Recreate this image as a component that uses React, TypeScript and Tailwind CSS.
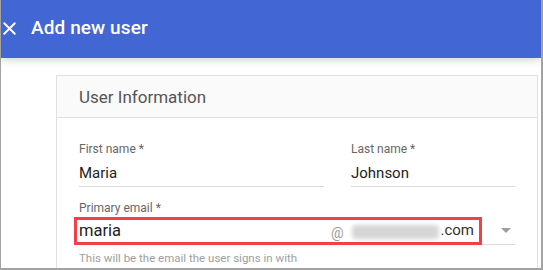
import { X } from 'lucide-react'

export default function App() {
  return (
    <div
      className="w-[543px] h-[270px] overflow-hidden bg-white border-l border-r-2 border-b-2 border-[#a3a3a3] flex flex-col"
      style={{ fontFamily: 'Roboto, "Liberation Sans", sans-serif' }}
    >
      {/* Barra superior */}
      <div className="relative z-10 h-[58px] shrink-0 bg-[#4266d4] flex items-center shadow-[0_2px_8px_rgba(0,0,0,0.18)]">
        <X size={21} strokeWidth={2.2} className="text-white -ml-[2px] -mt-[1px]" />
        <span className="ml-[11px] text-white text-[19px] font-medium tracking-[0.1px] -mt-[2px]">
          Add new user
        </span>
      </div>

      {/* Conteúdo */}
      <div className="flex-1 pl-[55px] pr-[3px] pt-[17px]">
        <div className="border border-[#e0e0e0] h-[220px]">
          <div className="h-[42px] bg-[#fafafa] border-b border-[#e0e0e0] flex items-center px-[22px]">
            <span className="text-[17px] text-[#555] pt-[2px]">User Information</span>
          </div>

          <div className="px-[22px] pt-[23px]">
            <div className="grid grid-cols-[245px_1fr] gap-x-[27px]">
              <div>
                <p className="text-[12px] leading-[16px] text-[#666]">First name *</p>
                <p className="mt-[6px] text-[15px] leading-[20px] text-[#222] border-b border-[#dcdcdc] pb-[3px]">
                  Maria
                </p>
              </div>
              <div>
                <p className="text-[12px] leading-[16px] text-[#666]">Last name *</p>
                <p className="mt-[6px] text-[15px] leading-[20px] text-[#222] border-b border-[#dcdcdc] pb-[3px]">
                  Johnson
                </p>
              </div>
            </div>

            <div className="mt-[13px]">
              <p className="text-[12px] leading-[16px] text-[#666]">Primary email *</p>
              <div className="relative mt-[1px] h-[28px] flex items-center border-b border-[#dcdcdc]">
                <span className="text-[16.5px] text-[#222] pt-[1px]">maria</span>
                <span className="ml-auto text-[14px] text-[#999] mt-[6px]">@</span>
                <span className="ml-[9px] w-[87px] h-[14px] mt-[2px] rounded-sm bg-[#d6d6d6] blur-[2px]" />
                <span className="ml-[1px] text-[15px] text-[#333]">.com</span>
                <span className="ml-[27px] mr-[4px] w-0 h-0 border-l-[5px] border-r-[5px] border-t-[5px] border-l-transparent border-r-transparent border-t-[#9e9e9e]" />
                {/* Destaque vermelho */}
                <div className="absolute left-[-5px] top-0 w-[408px] h-[28px] border-[3px] border-[#f04149]" />
              </div>
              <p className="mt-[5px] text-[11.5px] text-[#9e9e9e]">This will be the email the user signs in with</p>
            </div>
          </div>
        </div>
      </div>
    </div>
  )
}
